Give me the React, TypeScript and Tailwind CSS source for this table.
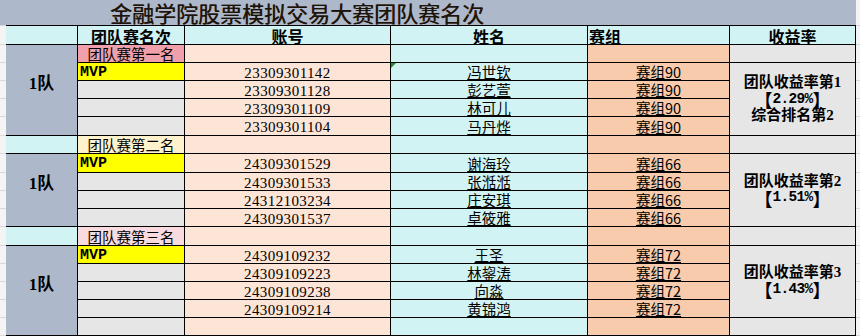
import React from 'react';

const cjk = "font-['Noto_Sans_CJK_SC',sans-serif]";
const serifCjk = "font-['Liberation_Serif','Noto_Sans_CJK_SC',serif]";
const mono = "font-['Liberation_Mono','Noto_Sans_CJK_SC',monospace]";

const BLUE = 'bg-[#adb9ca]';
const CYAN = 'bg-[#d2f3f3]';
const PEACH = 'bg-[#fce4d6]';
const SALMON = 'bg-[#f8cbad]';
const GRAY = 'bg-[#e6e6e6]';
const YELLOW = 'bg-[#ffff00]';

const ROW: Record<number, string> = {
  1: 'row-start-1', 2: 'row-start-2', 3: 'row-start-3', 4: 'row-start-4', 5: 'row-start-5',
  6: 'row-start-6', 7: 'row-start-7', 8: 'row-start-8', 9: 'row-start-9', 10: 'row-start-10',
  11: 'row-start-11', 12: 'row-start-12', 13: 'row-start-13', 14: 'row-start-14', 15: 'row-start-15',
  16: 'row-start-16', 17: 'row-start-17',
};
const COL: Record<number, string> = {
  1: 'col-start-1', 2: 'col-start-2', 3: 'col-start-3', 4: 'col-start-4', 5: 'col-start-5', 6: 'col-start-6',
};
const SPAN: Record<number, string> = { 1: 'row-span-1', 4: 'row-span-4', 5: 'row-span-5' };

const base = 'flex items-center justify-center whitespace-nowrap leading-none text-black';

type CellDef = { r: number; c: number; span?: number; cls: string; content?: React.ReactNode };

type Team = {
  label: string;
  labelBg: string;
  members: { acc: string; name: string }[];
  group: string;
  rank: string;
  pct: string;
  extra?: string;
};

const teams: Team[] = [
  {
    label: '团队赛第一名',
    labelBg: 'bg-[#f0a0aa]',
    members: [
      { acc: '23309301142', name: '冯世钦' },
      { acc: '23309301128', name: '彭艺萱' },
      { acc: '23309301109', name: '林可儿' },
      { acc: '23309301104', name: '马丹烨' },
    ],
    group: '赛组90',
    rank: '团队收益率第1',
    pct: '2.29%',
    extra: '综合排名第2',
  },
  {
    label: '团队赛第二名',
    labelBg: 'bg-[#fff2cc]',
    members: [
      { acc: '24309301529', name: '谢海玲' },
      { acc: '24309301533', name: '张湉湉' },
      { acc: '24312103234', name: '庄安琪' },
      { acc: '24309301537', name: '卓筱雅' },
    ],
    group: '赛组66',
    rank: '团队收益率第2',
    pct: '1.51%',
  },
  {
    label: '团队赛第三名',
    labelBg: 'bg-[#f9dadf]',
    members: [
      { acc: '24309109232', name: '王圣' },
      { acc: '24309109223', name: '林鋆涛' },
      { acc: '24309109238', name: '向淼' },
      { acc: '24309109214', name: '黄锦鸿' },
    ],
    group: '赛组72',
    rank: '团队收益率第3',
    pct: '1.43%',
  },
];

const rowsTpl =
  'grid-rows-[18px_17px_17px_17px_17px_18px_17px_18px_17px_17px_17px_18px_17px_17px_17px_17px_17px]';

const UL = 'underline underline-offset-[1px] decoration-1';

function buildCells(): CellDef[] {
  const cells: CellDef[] = [];
  const head = `${CYAN} ${cjk} text-[16px] font-bold pt-[1px]`;
  cells.push({ r: 1, c: 1, cls: CYAN });
  cells.push({ r: 1, c: 2, cls: head, content: '团队赛名次' });
  cells.push({ r: 1, c: 3, cls: head, content: '账号' });
  cells.push({ r: 1, c: 4, cls: head, content: <span className={UL}>姓名</span> });
  cells.push({ r: 1, c: 5, cls: `${head} !justify-start pl-[1px]`, content: <span className={UL}>赛组</span> });
  cells.push({ r: 1, c: 6, cls: head, content: <span className={UL}>收益率</span> });

  const teamCls = `${BLUE} ${serifCjk} text-[17px] font-semibold pb-[13px]`;
  cells.push({ r: 2, c: 1, span: 5, cls: teamCls, content: '1队' });
  cells.push({ r: 7, c: 1, cls: CYAN });
  cells.push({ r: 8, c: 1, span: 4, cls: teamCls, content: '1队' });
  cells.push({ r: 12, c: 1, cls: CYAN });
  cells.push({ r: 13, c: 1, span: 5, cls: teamCls, content: '1队' });

  teams.forEach((t, idx) => {
    const lr = 2 + idx * 5;
    cells.push({ r: lr, c: 2, cls: `${t.labelBg} ${cjk} text-[14.5px] pt-[2px]`, content: t.label });
    cells.push({ r: lr, c: 3, cls: PEACH });
    cells.push({ r: lr, c: 4, cls: CYAN });
    cells.push({ r: lr, c: 5, cls: SALMON });
    cells.push({ r: lr, c: 6, cls: GRAY });
    t.members.forEach((m, i) => {
      const r = lr + 1 + i;
      cells.push(
        i === 0
          ? { r, c: 2, cls: `${YELLOW} !justify-start pl-[2px] ${mono} text-[15px] font-bold pt-[1px]`, content: 'MVP' }
          : { r, c: 2, cls: GRAY }
      );
      cells.push({
        r,
        c: 3,
        cls: `${PEACH} font-['Liberation_Serif',serif] text-[15px] tracking-[0.4px] pt-[3px]`,
        content: m.acc,
      });
      cells.push({
        r,
        c: 4,
        cls: `${CYAN} relative ${cjk} text-[14.5px] pt-[2px]`,
        content: (
          <>
            {idx === 0 && i === 0 && (
              <span className="absolute left-0 top-0 w-0 h-0 border-t-[5px] border-t-[#1e8c28] border-r-[5px] border-r-transparent" />
            )}
            <span className={UL}>{m.name}</span>
          </>
        ),
      });
      cells.push({
        r,
        c: 5,
        cls: `${SALMON} ${cjk} text-[14.5px] pt-[2px]`,
        content: <span className={UL}>{t.group}</span>,
      });
    });
    cells.push({
      r: lr + 1,
      c: 6,
      span: 4,
      cls: `${GRAY} flex-col ${serifCjk} text-[15px] font-bold leading-[17.5px]`,
      content: (
        <>
          <span>{t.rank}</span>
          <span className="flex items-center h-[17.5px]">
            <span className={`${cjk} text-[18px] leading-none`}>【</span>
            <span className={`${mono} text-[14.5px] tracking-[-0.7px] leading-none`}>{t.pct}</span>
            <span className={`${cjk} text-[18px] leading-none`}>】</span>
          </span>
          {t.extra && <span>{t.extra}</span>}
        </>
      ),
    });
  });
  cells.push({ r: 17, c: 2, cls: GRAY });
  cells.push({ r: 17, c: 3, cls: PEACH });
  cells.push({ r: 17, c: 4, cls: CYAN });
  cells.push({ r: 17, c: 5, cls: SALMON });
  cells.push({ r: 17, c: 6, cls: GRAY });
  return cells;
}

function Strip({ className = '' }: { className?: string }) {
  const cells = Array.from({ length: 17 });
  return (
    <div className={`grid ${rowsTpl} gap-px bg-[#d9d9d9] pt-px pb-px ${className}`}>
      {cells.map((_, i) => (
        <div key={i} className="bg-[#f4f4f4]" />
      ))}
    </div>
  );
}

export default function App() {
  const cells = buildCells();
  return (
    <div className="w-[860px] h-[336px] overflow-hidden bg-white flex flex-col">
      <div className="h-[25px] flex shrink-0">
        <div
          className={`w-[856px] ${BLUE} pl-[110px] flex items-center text-[22px] text-[#1b140c] ${cjk} leading-[25px] [text-shadow:0.4px_0_0_#4a3212]`}
        >
          金融学院股票模拟交易大赛团队赛名次
        </div>
        <div className="flex-1 bg-[#f4f4f4]" />
      </div>
      <div className="flex">
        <Strip className="w-[6px] shrink-0" />
        <div
          className={`grid grid-cols-[71px_106px_205px_196px_141px_125px] ${rowsTpl} gap-px bg-black pt-px pb-px pr-px shrink-0`}
        >
          {cells.map((d, i) => (
            <div key={i} className={`${base} ${ROW[d.r]} ${COL[d.c]} ${SPAN[d.span ?? 1]} ${d.cls}`}>
              {d.content}
            </div>
          ))}
        </div>
        <Strip className="flex-1" />
      </div>
    </div>
  );
}
